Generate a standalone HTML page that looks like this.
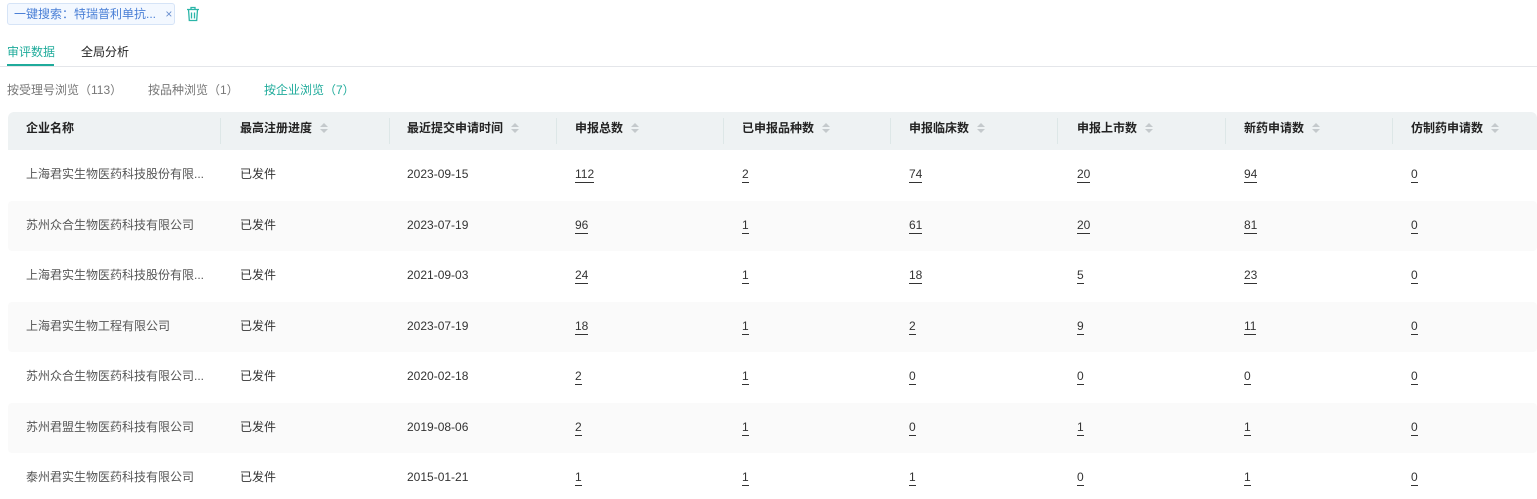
<!DOCTYPE html><html><head><meta charset="utf-8"><style>
body{margin:0;width:1537px;height:499px;overflow:hidden;background:#fff;font-family:"Liberation Sans","Noto Sans CJK SC",sans-serif;font-size:12px;color:#333}
.a{position:absolute;white-space:nowrap}
.tag{left:7px;top:3px;width:168px;height:22px;border:1px solid #d6e4f7;background:#f3f8ff;border-radius:3px;box-sizing:border-box;color:#4a7fd6;line-height:20px;padding-left:6px}
.row{position:absolute;left:8px;width:1529px;height:50px;border-radius:4px}
.c{position:absolute;line-height:14px}
u{text-decoration:none;border-bottom:1px solid #333;padding-bottom:1px}
.h{font-weight:bold;color:#222}
.sort{display:inline-block;vertical-align:middle;margin-left:8px;width:8px;height:11px;position:relative}
.sort:before{content:"";position:absolute;left:0;top:0;border:4px solid transparent;border-bottom:4px solid #c4c9cc;border-top:0}
.sort:after{content:"";position:absolute;left:0;top:6px;border:4px solid transparent;border-top:4px solid #c4c9cc;border-bottom:0}
.dv{position:absolute;top:118px;width:1px;height:26px;background:#dde7e7}
</style></head><body>
<div class="a tag">一键搜索：特瑞普利单抗... <span style="color:#6a8fcf;margin-left:6px">×</span></div>
<svg class="a" style="left:186px;top:6px" width="14" height="16" viewBox="0 0 14 16" fill="none" stroke="#2bb5a8" stroke-width="1.3"><path d="M1 3.5h12M5 3.5V1.5h4v2M2.5 3.5l.8 11h7.4l.8-11M5.5 6.5v6M8.5 6.5v6"/></svg>
<div class="a" style="left:7px;top:43px;color:#1fab9b">审评数据</div>
<div class="a" style="left:7px;top:64px;width:47px;height:2px;background:#1fab9b"></div>
<div class="a" style="left:81px;top:43px;color:#222">全局分析</div>
<div class="a" style="left:0;top:66px;width:1537px;height:1px;background:#e4e6ea"></div>
<div class="a" style="left:7px;top:81px;color:#777">按受理号浏览（113）</div>
<div class="a" style="left:148px;top:81px;color:#777">按品种浏览（1）</div>
<div class="a" style="left:264px;top:81px;color:#1fab9b">按企业浏览（7）</div>
<div class="row" style="top:112px;height:38px;background:#eef2f3;border-radius:6px 6px 0 0"></div>
<div id="t"></div>
<script>
var xs=[26,240,407,575,742,909,1077,1244,1411];
var hd=["企业名称","最高注册进度","最近提交申请时间","申报总数","已申报品种数","申报临床数","申报上市数","新药申请数","仿制药申请数"];
var dv=[220,389,556,723,890,1057,1225,1392];
var d=[["上海君实生物医药科技股份有限...","2023-09-15",112,2,74,20,94,0],
["苏州众合生物医药科技有限公司","2023-07-19",96,1,61,20,81,0],
["上海君实生物医药科技股份有限...","2021-09-03",24,1,18,5,23,0],
["上海君实生物工程有限公司","2023-07-19",18,1,2,9,11,0],
["苏州众合生物医药科技有限公司...","2020-02-18",2,1,0,0,0,0],
["苏州君盟生物医药科技有限公司","2019-08-06",2,1,0,1,1,0],
["泰州君实生物医药科技有限公司","2015-01-21",1,1,1,0,1,0]];
var h="";
dv.forEach(function(x){h+='<div class="dv" style="left:'+x+'px"></div>'});
hd.forEach(function(t,i){h+='<div class="a c h" style="left:'+xs[i]+'px;top:121px">'+t+(i?'<span class="sort"></span>':'')+'</div>'});
d.forEach(function(r,j){var y=150+j*50.5;
if(j%2)h+='<div class="row" style="top:'+y+'px;background:#fafafa"></div>';
var ty=y+17;
h+='<div class="a c" style="left:26px;top:'+ty+'px;color:#555">'+r[0]+'</div>';
h+='<div class="a c" style="left:240px;top:'+ty+'px">已发件</div>';
h+='<div class="a c" style="left:407px;top:'+ty+'px">'+r[1]+'</div>';
for(var k=2;k<8;k++)h+='<div class="a c" style="left:'+xs[k+1]+'px;top:'+ty+'px"><u>'+r[k]+'</u></div>';});
document.getElementById("t").innerHTML=h;
</script>
</body></html>
